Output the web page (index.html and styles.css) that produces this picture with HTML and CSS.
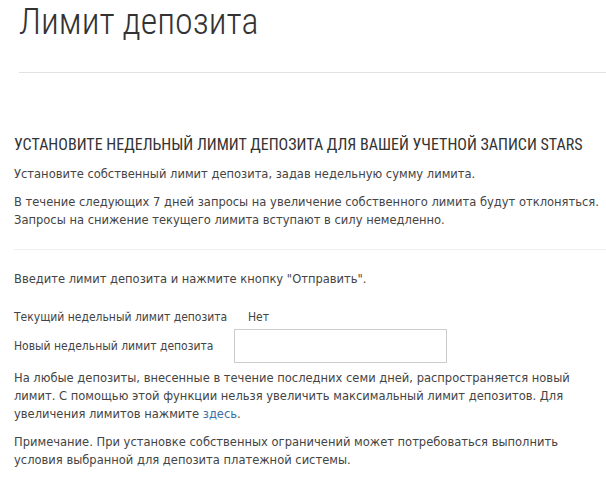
FILE: index.html
```html
<!DOCTYPE html>
<html lang="ru">
<head>
<meta charset="utf-8">
<title>Лимит депозита</title>
<link rel="stylesheet" href="styles.css">
</head>
<body>
<div class="page">
  <header class="page-header">
    <h1 class="page-title">Лимит депозита</h1>
  </header>
  <section class="content">
    <h2 class="section-title">УСТАНОВИТЕ НЕДЕЛЬНЫЙ ЛИМИТ ДЕПОЗИТА ДЛЯ ВАШЕЙ УЧЕТНОЙ ЗАПИСИ STARS</h2>
    <p class="text">Установите собственный лимит депозита, задав недельную сумму лимита.</p>
    <p class="text">В течение следующих 7 дней запросы на увеличение собственного лимита будут отклоняться. Запросы на снижение текущего лимита вступают в силу немедленно.</p>
    <hr class="divider">
    <div class="form-area">
      <p class="text intro">Введите лимит депозита и нажмите кнопку "Отправить".</p>
      <div class="form">
        <div class="row">
          <span class="label">Текущий недельный лимит депозита</span>
          <span class="value">Нет</span>
        </div>
        <div class="row">
          <label class="label" for="limit">Новый недельный лимит депозита</label>
          <input class="field" id="limit" type="text">
        </div>
      </div>
      <p class="text">На любые депозиты, внесенные в течение последних семи дней, распространяется новый лимит. С помощью этой функции нельзя увеличить максимальный лимит депозитов. Для увеличения лимитов нажмите <a class="link" href="#">здесь</a>.</p>
      <p class="text">Примечание. При установке собственных ограничений может потребоваться выполнить условия выбранной для депозита платежной системы.</p>
    </div>
  </section>
</div>
</body>
</html>
```
FILE: styles.css
```css
html, body {
  margin: 0;
  padding: 0;
  background: #fff;
}
body {
  font-family: "DejaVu Sans Condensed", "DejaVu Sans", sans-serif;
  color: #444;
}
.page {
  padding: 0 0 0 14px;
}
.page-header {
  margin-left: 5px;
  border-bottom: 1px solid #e2e2e2;
  height: 72px;
}
.page-title {
  margin: 0;
  font-family: Roboto, sans-serif;
  font-weight: 300;
  font-size: 36px;
  font-stretch: 75%;
  line-height: 44px;
  color: #333;
}
.content {
  padding-top: 62px;
}
.section-title {
  margin: 0 0 10px;
  font-family: "Liberation Sans Narrow", "Roboto Condensed", Roboto, sans-serif;
  font-weight: 400;
  font-size: 16px;
  line-height: 20px;
  color: #333;
}
.text {
  margin: 0 0 10px;
  font-size: 12.8px;
  line-height: 18px;
}
.divider {
  border: 0;
  border-top: 1px solid #eee;
  margin: 20px 0 20px;
}
.form-area {
  max-width: 566px;
}
.intro {
  margin-bottom: 20px;
}
.form {
  display: flex;
  flex-direction: column;
  gap: 3px;
  margin-bottom: 6px;
}
.row {
  display: flex;
  align-items: center;
  line-height: 18px;
}
.label {
  font-size: 12px;
  width: 220px;
}
.row:first-child .label {
  width: 234px;
}
.value {
  font-size: 12px;
}
.field {
  width: 213px;
  height: 34px;
  box-sizing: border-box;
  border: 1px solid #ccc;
  padding: 0;
  margin: 0;
}
.link {
  color: #3b6fa8;
  text-decoration: none;
}
```
